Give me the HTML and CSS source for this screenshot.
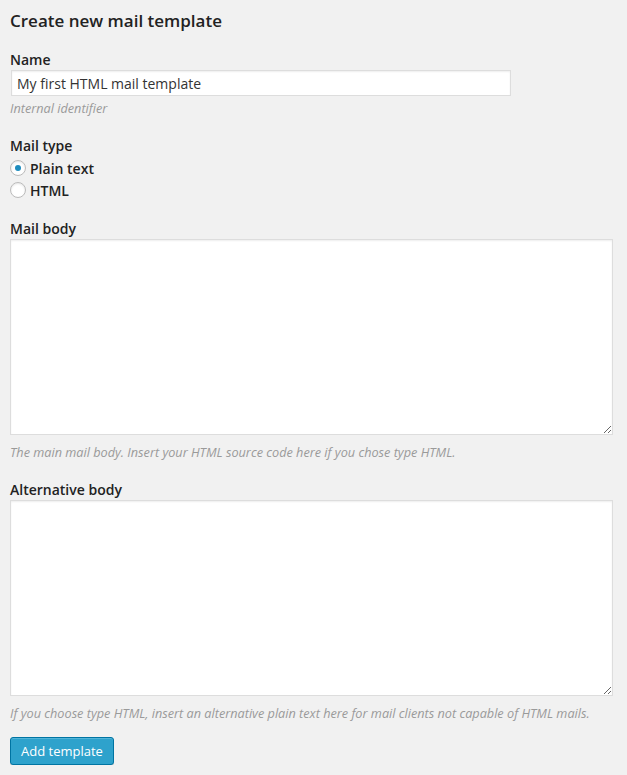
FILE: index.html
```html
<!DOCTYPE html>
<html lang="en">
<head>
  <meta charset="UTF-8" />
  <meta name="viewport" content="width=device-width, initial-scale=1.0"/>
  <title>Create new mail template</title>
  <link rel="stylesheet" href="styles.css">
</head>
<body>
  <form class="template-form">
    <h3>Create new mail template</h3>

    <div class="field">
      <label class="field-label" for="name">Name</label>
      <input type="text" id="name" class="text-input" value="My first HTML mail template">
      <p class="description">Internal identifier</p>
    </div>

    <div class="field">
      <div class="field-label radio-label">Mail type</div>
      <label class="radio-row"><input type="radio" name="type" checked> Plain text</label>
      <label class="radio-row"><input type="radio" name="type"> HTML</label>
    </div>

    <div class="field">
      <label class="field-label" for="body">Mail body</label>
      <textarea id="body" class="text-area"></textarea>
      <p class="description">The main mail body. Insert your HTML source code here if you chose type HTML.</p>
    </div>

    <div class="field">
      <label class="field-label" for="altbody">Alternative body</label>
      <textarea id="altbody" class="text-area"></textarea>
      <p class="description desc-last">If you choose type HTML, insert an alternative plain text here for mail clients not capable of HTML mails.</p>
    </div>

    <button type="button" class="button-primary">Add template</button>
  </form>
</body>
</html>
```

FILE: styles.css
```css
body {
  font-family: 'Open Sans', sans-serif;
  font-size: 14px;
  color: #222;
  background: #f1f1f1;
  margin: 0;
  padding: 0;
}

.template-form {
  padding: 8px 14px 0 10px;
}

h3 {
  font-size: 17px;
  font-weight: 600;
  line-height: 25px;
  margin: 0 0 17px;
}

.field {
  margin-bottom: 18px;
}

.field-label {
  display: block;
  font-weight: 600;
  line-height: 20px;
}

.radio-label {
  margin-bottom: 1px;
}

.text-input {
  display: block;
  box-sizing: border-box;
  width: 500px;
  height: 26px;
  margin: 0 0 0 1px;
  padding: 2px 5px;
  font-family: 'Open Sans', sans-serif;
  font-size: 14px;
  color: #333;
  background: #fff;
  border: 1px solid #ddd;
  box-shadow: inset 0 1px 2px rgba(0, 0, 0, 0.07);
  outline: none;
}

.text-area {
  display: block;
  box-sizing: border-box;
  width: 100%;
  height: 196px;
  margin: 0;
  padding: 4px 6px;
  font-family: 'Open Sans', sans-serif;
  font-size: 14px;
  background: #fff;
  border: 1px solid #ddd;
  box-shadow: inset 0 1px 2px rgba(0, 0, 0, 0.07);
  outline: none;
}

.description {
  margin: 2px 0 0;
  font-size: 12.7px;
  line-height: 20px;
  font-style: italic;
  color: #9a9a9a;
}

.text-area + .description {
  margin-top: 7px;
}

.desc-last {
  margin-bottom: -4px;
}

.radio-row {
  display: flex;
  align-items: center;
  gap: 4px;
  height: 22px;
  font-weight: 600;
}

.radio-row input {
  appearance: none;
  -webkit-appearance: none;
  box-sizing: border-box;
  width: 16px;
  height: 16px;
  margin: 0;
  border: 1px solid #bbb;
  border-radius: 50%;
  background: #fff;
  box-shadow: inset 0 1px 2px rgba(0, 0, 0, 0.1);
  display: grid;
  place-content: center;
}

.radio-row input:checked::before {
  content: '';
  width: 6px;
  height: 6px;
  border-radius: 50%;
  background: #1e8cbe;
}

.button-primary {
  height: 28px;
  padding: 0 10px 1px;
  font-family: 'Open Sans', sans-serif;
  font-size: 13px;
  line-height: 26px;
  color: #fff;
  background: #2ea2cc;
  border: 1px solid #0074a2;
  border-radius: 3px;
  box-shadow: inset 0 1px 0 rgba(120, 200, 230, 0.5), 0 1px 0 rgba(0, 0, 0, 0.15);
  cursor: pointer;
}
```
